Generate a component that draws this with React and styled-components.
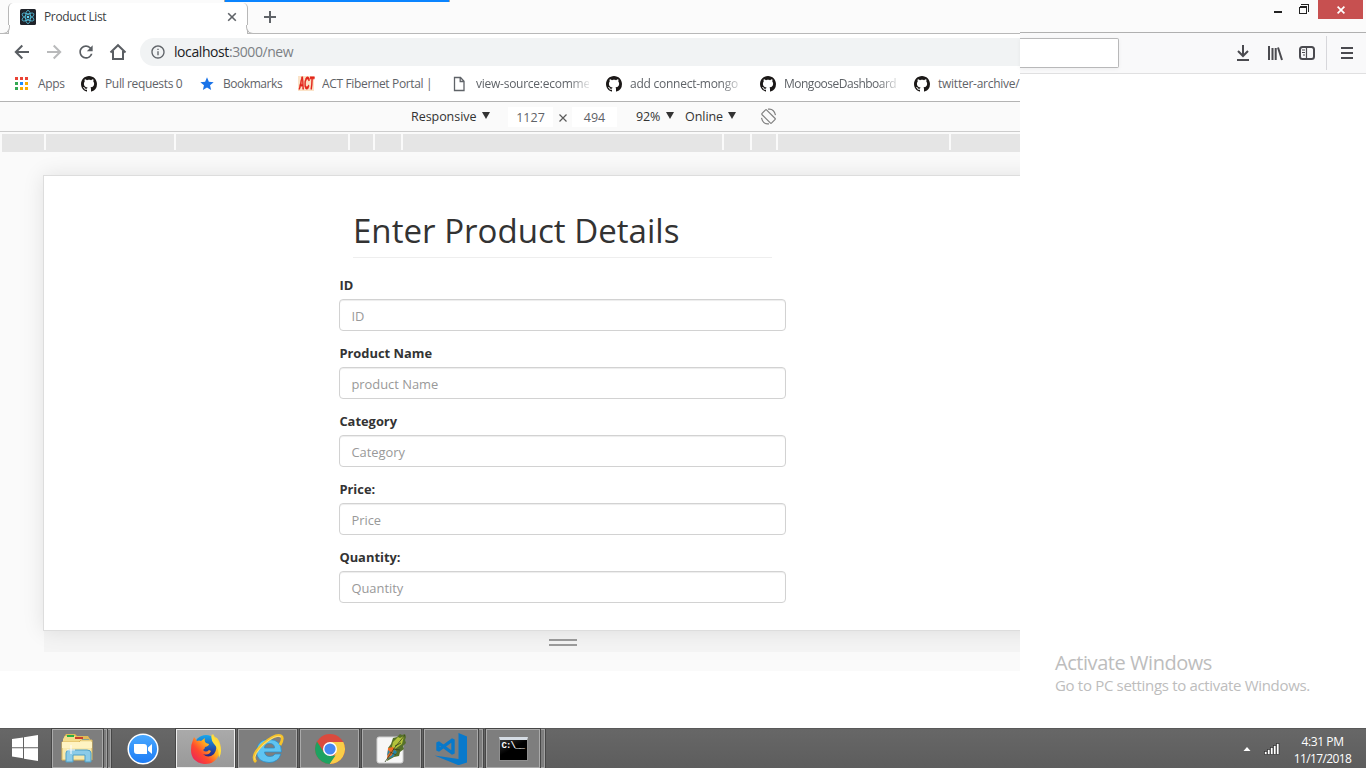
import React from "react";
import styled, { createGlobalStyle } from "styled-components";
import { MdRefresh, MdInfoOutline, MdStar } from "react-icons/md";

const Global = createGlobalStyle`
  * { box-sizing: border-box; }
  body { margin: 0; overflow: hidden; background: #fff; font-family: "Open Sans", "Noto Sans", sans-serif; }
  svg { display: block; flex: none; }
`;

const Desktop = styled.div`
  width: 1366px;
  height: 768px;
  display: flex;
  flex-direction: column;
  background: #fff;
`;
const TitleBar = styled.header`
  position: relative;
  height: 32px;
  flex: none;
  display: flex;
  background: #fbfbfb;
`;
const LoadingLine = styled.div`
  position: absolute;
  left: 224px;
  top: 0;
  width: 226px;
  height: 2px;
  background: #0a84ff;
  border: solid #b0a8a0;
  border-width: 0 1px;
`;
const Tab = styled.div`
  position: relative;
  width: 240px;
  height: 31px;
  margin: 3px 0 0 8px;
  display: flex;
  align-items: center;
  padding: 0 10px 3px 11px;
  background: #fff;
  border: solid #b8b8b8;
  border-width: 0 1px;
  border-radius: 5px 5px 0 0;
  z-index: 1;
  &::before, &::after {
    content: "";
    position: absolute;
    bottom: 0;
    width: 8px;
    height: 8px;
    background: #fbfbfb;
    border-bottom: 1px solid #b8b8b8;
  }
  &::before { left: -8px; border-right: 1px solid #b8b8b8; border-bottom-right-radius: 7px; }
  &::after { right: -8px; border-left: 1px solid #b8b8b8; border-bottom-left-radius: 7px; }
`;
const Label = styled.span`
  font-size: ${(p) => p.$size || 12}px;
  letter-spacing: ${(p) => p.$track || 0}px;
  color: ${(p) => p.$color || "#5f6368"};
  white-space: nowrap;
  line-height: 18px;
`;
const TabTitle = styled(Label)`
  flex: 1;
  margin-left: 8px;
`;
const NewTab = styled.div`
  margin: 11px 0 0 16px;
`;
const WindowButtons = styled.div`
  margin-left: auto;
  height: 19px;
  display: flex;
  align-items: flex-start;
  padding-right: 3px;
`;
const Minimize = styled.div`
  width: 8px;
  height: 2px;
  margin: 11px 17px 0 0;
  background: #222;
`;
const Restore = styled.div`
  margin: 4px 9px 0 0;
`;
const CloseButton = styled.div`
  width: 45px;
  height: 19px;
  background: #c75050;
  display: flex;
  align-items: center;
  justify-content: center;
`;
const Windows = styled.main`
  flex: none;
  height: 696px;
  display: flex;
`;
const Chrome = styled.section`
  width: 1020px;
  height: 639px;
  background: #fafafa;
  border-top: 1px solid #fbfbfb;
  overflow: hidden;
`;
const AddressRow = styled.div`
  height: 37px;
  display: flex;
  align-items: center;
  background: #fff;
  border-top: 1px solid #b8b8b8;
  padding-left: 12px;
`;
const NavIcons = styled.div`
  display: flex;
  gap: 12px;
  width: 128px;
`;
const AddressBox = styled.div`
  flex: 1;
  height: 28px;
  display: flex;
  align-items: center;
  padding-left: 10px;
  gap: 8px;
  background: #f1f3f4;
  border-radius: 14px 0 0 14px;
`;
const Host = styled.span`
  color: #202124;
`;
const Bookmarks = styled.div`
  height: 32px;
  background: #fff;
  border-bottom: 1px solid #b3b3b3;
  display: flex;
  align-items: center;
  padding: 0 0 4px 14px;
`;
const Bookmark = styled.div`
  width: ${(p) => p.$width}px;
  flex: none;
  display: flex;
  align-items: center;
  gap: ${(p) => p.$gap || 8}px;
`;
const Clip = styled.div`
  width: ${(p) => p.$width}px;
  height: 18px;
  display: flex;
  overflow: hidden;
  mask-image: ${(p) => (p.$fade ? "linear-gradient(90deg,#000 calc(100% - 20px),rgba(0,0,0,.15))" : "none")};
`;
const DeviceBar = styled.div`
  height: 30px;
  display: flex;
  align-items: center;
  background: #fafafa;
  border-bottom: 1px solid #ccc;
  padding-left: 411px;
`;
const Select = styled.div`
  width: ${(p) => p.$width}px;
  display: flex;
  align-items: center;
  justify-content: space-between;
  margin: 0 ${(p) => p.$after}px 0 ${(p) => p.$before || 0}px;
  padding-top: 1px;
`;
const Arrow = styled.i`
  border: 4px solid transparent;
  border-top: 7px solid #333;
  border-bottom: 0;
  margin-bottom: 3px;
`;
const SizeField = styled.div`
  width: 45px;
  height: 20px;
  display: flex;
  align-items: center;
  justify-content: center;
  background: #fff;
  padding-top: 2px;
`;
const Times = styled.div`
  width: 19px;
  display: flex;
  justify-content: center;
  padding-top: 3px;
`;
const MediaBar = styled.div`
  height: 18px;
  margin: 2px 0 0 2px;
  display: flex;
  gap: 2px;
  background: #fafafa;
  border-bottom: 2px solid #e5e5e5;
`;
const MediaRange = styled.div`
  width: ${(p) => p.$width}px;
  flex: none;
  background: #e5e5e5;
`;
const Viewport = styled.div`
  width: 1100px;
  height: 456px;
  margin: 23px 0 0 43px;
  background: #fff;
  border: 1px solid #ddd;
  box-shadow: 0 0 20px rgba(0, 0, 0, 0.1);
  padding: 36px 0 0 295.4px;
  position: relative;
`;
const Heading = styled.h1`
  width: 419px;
  height: 46px;
  margin: 0 0 18px 13.6px;
  border-bottom: 1px solid #eee;
  font-size: 33.1px;
  font-weight: 400;
  line-height: 38px;
  letter-spacing: 0;
  color: #333;
  white-space: nowrap;
`;
const Field = styled.label`
  display: block;
  width: 447px;
  height: 68px;
`;
const FieldName = styled.div`
  height: 23px;
  font-size: 12.9px;
  font-weight: 700;
  line-height: 19px;
  color: #333;
`;
const Input = styled.input`
  display: block;
  width: 446.2px;
  height: 32px;
  padding: 1px 11px 0;
  border: 1px solid #d2d2d2;
  border-radius: 4px;
  box-shadow: inset 0 1px 1px rgba(0, 0, 0, 0.075);
  font: 12.9px "Open Sans", sans-serif;
  &::placeholder { color: #999; opacity: 1; }
`;
const Resizer = styled.div`
  height: 21px;
  margin-left: 44px;
  padding: 8px 0 0 505px;
  background: #f4f4f4;
`;
const Grip = styled.div`
  width: 28px;
  height: 7px;
  border: solid #9c9c9c;
  border-width: 2px 0;
`;
const Firefox = styled.section`
  flex: 1;
  display: flex;
  flex-direction: column;
  border-top: 1px solid #b0b0b0;
`;
const FirefoxBar = styled.div`
  height: 41px;
  background: #f9f9fa;
  border-bottom: 1px solid #e0e0e1;
  display: flex;
  align-items: center;
`;
const FirefoxField = styled.div`
  width: 99px;
  height: 30px;
  background: #fff;
  border: 1px solid #b8b8b9;
  border-left: 0;
  border-radius: 0 2px 2px 0;
  box-shadow: 0 1px 4px rgba(0, 0, 0, 0.05);
`;
const FirefoxTools = styled.div`
  margin-left: auto;
  display: flex;
  align-items: center;
  gap: 16px;
  padding-right: 11px;
`;
const Divider = styled.div`
  width: 1px;
  height: 34px;
  margin: 0 -4px 0 -5px;
  background: #d7d7db;
`;
const Watermark = styled.div`
  margin: auto 0 34px 35px;
  display: flex;
  flex-direction: column;
`;
const WatermarkTitle = styled(Label)`
  line-height: 27px;
`;
const Taskbar = styled.footer`
  height: 40px;
  display: flex;
  background: linear-gradient(#676767, #5d5d5d);
  border-top: 1px solid #595959;
`;
const Start = styled.div`
  width: 51px;
  padding: 6px 0 0 12px;
`;
const Task = styled.div`
  width: ${(p) => p.$width}px;
  height: 39px;
  margin-left: ${(p) => p.$before || 0}px;
  display: flex;
  align-items: center;
  justify-content: center;
  background: ${(p) => (p.$plain ? "transparent" : p.$active ? "linear-gradient(#aaa,#999)" : "#7e7e7e")};
  border: 1px solid ${(p) => (p.$plain ? "transparent" : p.$active ? "#eee" : "#aaa")};
  box-shadow: ${(p) => (p.$plain ? "none" : "0 0 0 1px #474747")};
`;
const Stack = styled.div`
  width: ${(p) => p.$width}px;
  height: 39px;
  margin-left: 1px;
  background: #7e7e7e;
  border: 1px solid #a2a2a2;
  border-left: 0;
  box-shadow: 1px 0 0 #474747;
`;
const Tray = styled.div`
  margin-left: auto;
  display: flex;
  align-items: center;
`;
const TrayArrow = styled.div`
  margin-right: -1px;
`;
const Clock = styled.div`
  width: 85px;
  display: flex;
  flex-direction: column;
  align-items: center;
  padding: 2px 2px 0 0;
`;
const ClockText = styled(Label)`
  line-height: 17px;
`;

const Svg = ({ w = 20, h = w, box = `0 0 ${w} ${h}`, children, ...rest }) => (
  <svg width={w} height={h} viewBox={box} fill="none" {...rest}>{children}</svg>
);

const ReactLogo = () => (
  <Svg w={16}>
    <rect width="16" height="16" rx="1.5" fill="#20232a" />
    <g stroke="#53c1de" strokeWidth=".8">
      {[0, 60, 120].map((a) => (
        <ellipse key={a} cx="8" cy="8" rx="6.6" ry="2.6" transform={`rotate(${a + 90} 8 8)`} />
      ))}
    </g>
    <circle cx="8" cy="8" r="1.3" fill="#61dafb" />
  </Svg>
);
const Github = () => (
  <Svg w={16}>
    <path fill="#1b1817" d="M8 0C3.58 0 0 3.58 0 8c0 3.54 2.29 6.53 5.47 7.59.4.07.55-.17.55-.38 0-.19-.01-.82-.01-1.49-2.01.37-2.53-.49-2.69-.94-.09-.23-.48-.94-.82-1.13-.28-.15-.68-.52-.01-.53.63-.01 1.08.58 1.23.82.72 1.21 1.87.87 2.33.66.07-.52.28-.87.51-1.07-1.78-.2-3.64-.89-3.64-3.95 0-.87.31-1.59.82-2.15-.08-.2-.36-1.02.08-2.12 0 0 .67-.21 2.2.82.64-.18 1.32-.27 2-.27s1.36.09 2 .27c1.53-1.04 2.2-.82 2.2-.82.44 1.1.16 1.92.08 2.12.51.56.82 1.27.82 2.15 0 3.07-1.87 3.75-3.65 3.95.29.25.54.73.54 1.48 0 1.07-.01 1.93-.01 2.2 0 .21.15.46.55.38A8.01 8.01 0 0 0 16 8c0-4.42-3.58-8-8-8Z" />
  </Svg>
);
const AppsGrid = () => {
  const colors = ["#ea4335", "#ea4335", "#ea4335", "#34a853", "#1a8cff", "#f9ab00", "#34a853", "#f9ab00", "#f9ab00"];
  return (
    <Svg w={15} h={16}>
      {colors.map((c, i) => (
        <rect key={i} x={1 + (i % 3) * 5} y={1 + Math.floor(i / 3) * 5} width="3" height="3" fill={c} />
      ))}
    </Svg>
  );
};
const ActBadge = styled.div`
  width: 16px;
  height: 15px;
  flex: none;
  display: flex;
  align-items: center;
  justify-content: center;
  background: #fbe3c8;
  color: #e2231a;
  font: italic 700 14px/15px "Liberation Sans", sans-serif;
  -webkit-text-stroke: 0.7px #e2231a;
`;
const ActText = styled.span`
  transform: scale(0.52, 1.2);
`;
const PageIcon = () => (
  <Svg w={16} stroke="#5f6368" strokeWidth="1.3">
    <path d="M2.500 1.500h6l3.500 3.700v9.300h-9.500zM8.200 1.500v4h3.800" />
  </Svg>
);

const ExplorerIcon = () => (
  <Svg w={34} h={32}>
    <path d="M3 4l2-3h9l2 2h11l2 3v20H3z" fill="#e0b957" />
    <path d="M4 3h10l2 3h12v21H2V6z" fill="#f3dc8b" />
    <path d="M6 3h7" stroke="#27ae43" strokeWidth="2" />
    <path d="M14 5h8" stroke="#c8402b" strokeWidth="2" />
    <path d="M21 7h7" stroke="#2f8bd8" strokeWidth="2" />
    <path d="M1 9h17l2-2h11v20H1z" fill="#f8e9ad" stroke="#dcb75b" />
    <path d="M1 9h30v6H1z" fill="#fff3c2" />
    <path d="M5 29V20q0-3 4-3h17q4 0 4 3v9h-6v-7H12v7z" fill="#8ccbe8" stroke="#4e9fc6" />
    <path d="M10 12v9M6 17h8" stroke="#fff" />
  </Svg>
);
const ZoomIcon = () => (
  <Svg w={32}>
    <defs><linearGradient id="zm" x2="0" y2="1"><stop stopColor="#4aa9ff" /><stop offset="1" stopColor="#1c7bf5" /></linearGradient></defs>
    <circle cx="16" cy="16" r="14.8" fill="url(#zm)" stroke="#fff" strokeWidth="1.5" />
    <path fill="#fff" d="M7 11h10q3 0 3 3v7H10q-3 0-3-3zM21 14.5l4-3.5v10l-4-3.5z" />
  </Svg>
);
const FirefoxIcon = () => (
  <Svg w={32}>
    <defs>
      <linearGradient id="fx" x1="1" y1="0" x2="0" y2="1"><stop stopColor="#fff04a" /><stop offset=".4" stopColor="#ffb01f" /><stop offset=".65" stopColor="#ff4a2e" /><stop offset="1" stopColor="#e31768" /></linearGradient>
      <linearGradient id="fb" x2="0" y2="1"><stop stopColor="#17a8ee" /><stop offset="1" stopColor="#29127a" /></linearGradient>
    </defs>
    <circle cx="16" cy="14" r="12" fill="url(#fb)" />
    <path fill="url(#fx)" d="M3 7l1-3 3 4q2-1 4 0l4-3q-1 3 1 5l3 1q0 2-4 3 0 2-2 3 3 3 6 0l2 1q-2 5-8 3 5 5 11 0 5-7-1-13-2-4 0-7 1 3 4 4 6 7 2 17-5 10-15 9Q1 29 1 17q0-6 2-10z" />
    <path fill="#ffdf3e" d="M22 1q1 3 5 7 7 8 2 17 0-10-5-14-4-5-2-10z" />
  </Svg>
);
const IeIcon = () => (
  <Svg w={32}>
    <path fill="#5fc4f2" stroke="#2589c5" strokeWidth=".7" d="M29.500 19H12.500q.5 4.500 5.500 4.500 3.500 0 5-2.500h6q-3 8.500-12 8.500Q4.500 29 4.500 18 5.500 6.500 17 6.500q12.500 0 12.500 12.500zM12.500 15h10q0-4.500-5-4.500t-5 4.500z" />
    <path d="M4 29Q-2 23 11 11 24 0 29 3q3 2-1 9" stroke="#f5c32c" strokeWidth="2.800" />
    <path d="M3 27Q1 22 12 11 24 1 29 4" stroke="#ffe890" strokeWidth=".8" />
  </Svg>
);
const ChromeIcon = () => (
  <Svg w={32}>
    <circle cx="16" cy="16" r="15" fill="#db4a3e" />
    <path fill="#f9cd47" d="M16 9h13.300A15 15 0 0 1 15.500 31L22.100 19.500Z" />
    <path fill="#1da261" d="M3 8.500 10 19.500 16 23l5.500-.5L15.500 31A15 15 0 0 1 3 8.500Z" />
    <circle cx="16" cy="16" r="7" fill="#fff" />
    <circle cx="16" cy="16" r="5.600" fill="#4688f1" />
  </Svg>
);
const PaintIcon = () => (
  <Svg w={32}>
    <rect x="1" y="4" width="26" height="26" rx="2" fill="#f7f7f7" stroke="#d0d0d0" />
    <path fill="#55702a" d="M29 1l1 3-1 3 1 3-3 3 1 3-4 3-1 4-5 1-7 4 2-9-1-4 3-4 2-6 4-1 3-3 2 1z" />
    <path fill="#b3c33b" d="M28 3l-2 8-7 5-4 2 2-9 5-5 2 1z" />
    <path fill="#ef6d25" d="M12 15l5-1 3 4-2 5-7 3z" />
    <path fill="#2488aa" d="M18 16l3 3-4 5-6 2 5-4zM12 17l-1 6 3-4z" />
    <path d="M29 2Q19 13 9 29M19 13l6-3M17 16l7 1M14 19l6 3" stroke="#36421f" strokeWidth=".8" />
  </Svg>
);
const CodeIcon = () => (
  <Svg w={34} h={32}>
    <path fill="#0879cb" d="M24.500 0l8.500 3.500v26L24.500 32.200.5 22.500l24 3.500z" />
    <path d="M4 9.500 19 20.500V6.500L4 17.500z" stroke="#0879cb" strokeWidth="3.400" strokeLinejoin="bevel" />
  </Svg>
);
const TermWindow = styled.div`
  width: 29px;
  height: 24px;
  background: linear-gradient(150deg, #333, #000 45%);
  border: 1px solid #8f8f8f;
  border-top: 3px solid #d5dce4;
  color: #fff;
  font: 700 9px/10px "Liberation Mono", monospace;
  padding: 1px 0 0 2px;
  letter-spacing: -0.9px;
  white-space: nowrap;
`;

const fields = [
  ["ID", "ID"],
  ["Product Name", "product Name"],
  ["Category", "Category"],
  ["Price:", "Price"],
  ["Quantity:", "Quantity"],
];
const mediaRanges = [42, 128, 172, 23, 26, 319, 26, 24, 171, 69];

export default function App() {
  return (
    <Desktop>
      <Global />
      <TitleBar>
        <LoadingLine />
        <Tab>
          <ReactLogo />
          <TabTitle $track={-0.35} $color="#3c4043">Product List</TabTitle>
          <Svg w={10} stroke="#5f6368" strokeWidth="1.6"><path d="M1.200 1.200l7.600 7.600M8.800 1.200 1.200 8.800" /></Svg>
        </Tab>
        <NewTab><Svg w={12} stroke="#5f6368" strokeWidth="2"><path d="M6 0v12M0 6h12" /></Svg></NewTab>
        <WindowButtons>
          <Minimize />
          <Restore>
            <Svg w={10} stroke="#222" shapeRendering="crispEdges"><path d="M.5 3.500h7v6h-7zM.5 2.500h7M2 .5h7.500V8" /></Svg>
          </Restore>
          <CloseButton><Svg w={8} stroke="#fff" strokeWidth="1.700"><path d="M.6.6l6.800 6.800M7.400.6.6 7.400" /></Svg></CloseButton>
        </WindowButtons>
      </TitleBar>
      <Windows>
        <Chrome>
          <AddressRow>
            <NavIcons>
              <Svg w={20} stroke="#5a5e63" strokeWidth="2"><path d="M17 10H4M10.300 3.500 3.800 10l6.500 6.500" /></Svg>
              <Svg w={20} stroke="#b9babb" strokeWidth="2"><path d="M3 10h13M9.700 3.500l6.500 6.500-6.500 6.500" /></Svg>
              <MdRefresh size={20} color="#5a5e63" />
              <Svg w={20} stroke="#5a5e63" strokeWidth="2"><path d="M2.500 10.500 10 3.200l7.500 7.300M5 9v8h10V9" /></Svg>
            </NavIcons>
            <AddressBox>
              <MdInfoOutline size={16} color="#5f6368" />
              <Label $size={14} $track={-0.42} $color="#7c8084"><Host>localhost</Host>:3000/new</Label>
            </AddressBox>
          </AddressRow>
          <Bookmarks>
            <Bookmark $width={67} $gap={9}><AppsGrid /><Label $track={-0.35}>Apps</Label></Bookmark>
            <Bookmark $width={118}><Github /><Label $track={-0.35}>Pull requests 0</Label></Bookmark>
            <Bookmark $width={99}><MdStar size={16} color="#1a73e8" /><Label $track={-0.45}>Bookmarks</Label></Bookmark>
            <Bookmark $width={154}>
              <ActBadge><ActText>ACT</ActText></ActBadge>
              <Clip $width={110}><Label $track={-0.35}>ACT Fibernet Portal |</Label></Clip>
            </Bookmark>
            <Bookmark $width={154}><PageIcon /><Clip $width={113} $fade><Label $track={-0.25}>view-source:ecomme</Label></Clip></Bookmark>
            <Bookmark $width={154}><Github /><Clip $width={111} $fade><Label $track={-0.25}>add connect-mongo</Label></Clip></Bookmark>
            <Bookmark $width={154}><Github /><Clip $width={114} $fade><Label $track={-0.5}>MongooseDashboard</Label></Clip></Bookmark>
            <Bookmark $width={110}><Github /><Label $track={-0.25}>twitter-archive/</Label></Bookmark>
          </Bookmarks>
          <DeviceBar>
            <Select $width={79} $after={18}><Label $color="#333" $size={12.500} $track={-0.05}>Responsive</Label><Arrow /></Select>
            <SizeField><Label $size={12.500}>1127</Label></SizeField>
            <Times><Svg w={8} stroke="#5a5a5a" strokeWidth="1.200"><path d="M.5.5l7 7M7.500.5l-7 7" /></Svg></Times>
            <SizeField><Label $size={12.500}>494</Label></SizeField>
            <Select $width={38} $before={19} $after={11}><Label $color="#333" $size={12.500} $track={-0.1}>92%</Label><Arrow /></Select>
            <Select $width={51} $after={24}><Label $color="#333" $size={12.500} $track={-0.05}>Online</Label><Arrow /></Select>
            <Svg w={17} stroke="#808080" strokeWidth="1.200">
              <rect x="5.200" y="1.700" width="6.600" height="13.600" rx="1" transform="rotate(-45 8.500 8.500)" />
              <path d="M8 1.200q6-1 7.500 6M9 15.800q-6 1-7.500-6" />
            </Svg>
          </DeviceBar>
          <MediaBar>{mediaRanges.map((w, i) => <MediaRange key={i} $width={w} />)}</MediaBar>
          <Viewport>
            <Heading>Enter Product Details</Heading>
            {fields.map(([name, hint]) => (
              <Field key={name}>
                <FieldName>{name}</FieldName>
                <Input placeholder={hint} />
              </Field>
            ))}
          </Viewport>
          <Resizer><Grip /></Resizer>
        </Chrome>
        <Firefox>
          <FirefoxBar>
            <FirefoxField />
            <FirefoxTools>
              <Svg w={16} stroke="#4a4a4f" strokeWidth="2"><path d="M8 0v11M3 6l5 5 5-5M2 15h12" /></Svg>
              <Svg w={16} stroke="#4a4a4f" strokeWidth="2"><path d="M2 1v14M5.500 3v12M8.700 3v12M11 2.500l4 12.500" /></Svg>
              <Svg w={16} stroke="#4a4a4f"><rect x="1" y="2" width="14" height="12" rx="2.500" strokeWidth="2" /><path d="M7.500 2v12M3 5h3M3 7.500h3M4 10h2" strokeWidth="1.200" /></Svg>
              <Divider />
              <Svg w={16} stroke="#4a4a4f" strokeWidth="2"><path d="M2 3h12M2 8h12M2 13h12" /></Svg>
            </FirefoxTools>
          </FirefoxBar>
          <Watermark>
            <WatermarkTitle $size={20} $track={-0.45} $color="#bdbdbd">Activate Windows</WatermarkTitle>
            <Label $size={15} $track={-0.32} $color="#bdbdbd">Go to PC settings to activate Windows.</Label>
          </Watermark>
        </Firefox>
      </Windows>
      <Taskbar>
        <Start><Svg w={26} box="0 0 26 26"><path fill="#fff" d="M0 4l11-1.600V12.300H0zM12 2.200 26 0v12.300H12zM0 13.300h11v9.900L0 21.600zM12 13.300h14V26l-14-2.200z" /></Svg></Start>
        <Task $width={51} $before={1}><ExplorerIcon /></Task>
        <Stack $width={3} /><Stack $width={3} />
        <Task $plain $width={62} $before={1}><ZoomIcon /></Task>
        <Task $active $width={59} $before={2}><FirefoxIcon /></Task>
        <Task $width={59} $before={3}><IeIcon /></Task>
        <Task $width={59} $before={3}><ChromeIcon /></Task>
        <Task $width={59} $before={3}><PaintIcon /></Task>
        <Task $width={54} $before={3}><CodeIcon /></Task>
        <Stack $width={4} />
        <Task $width={54} $before={3}><TermWindow>C:\__</TermWindow></Task>
        <Stack $width={4} />
        <Tray>
          <TrayArrow><Svg w={8} h={6}><path fill="#fff" d="M4 1l3.500 4h-7z" /></Svg></TrayArrow>
          <Svg w={31} h={14}>
            {[0, 1, 2, 3, 4].map((i) => <rect key={i} x={14.500 + i * 3} y={9.500 - i * 2} width="2.500" height={3 + i * 2} fill="#fff" stroke="#333" strokeWidth=".7" />)}
          </Svg>
          <Clock>
            <ClockText $color="#fff" $track={-0.4}>4:31 PM</ClockText>
            <ClockText $color="#fff" $track={-0.6}>11/17/2018</ClockText>
          </Clock>
        </Tray>
      </Taskbar>
    </Desktop>
  );
}
